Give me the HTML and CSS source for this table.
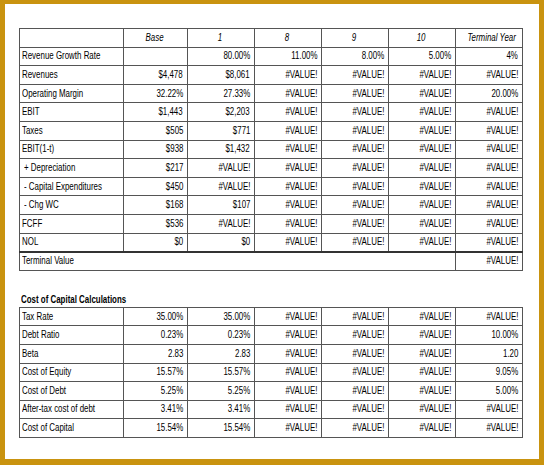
FILE: index.html
```html
<!DOCTYPE html>
<html lang="en">
<head>
    <meta charset="UTF-8">
    <title>FCFF Valuation</title>
    <link rel="stylesheet" href="styles.css">
</head>
<body>
    <div class="frame">
        <table class="sheet">
            <colgroup>
                <col class="c-label"><col class="c-base"><col class="c-yr"><col class="c-yr"><col class="c-yr"><col class="c-yr"><col class="c-yr">
            </colgroup>
            <tr class="head">
                <td></td><td><span>Base</span></td><td><span>1</span></td><td><span>8</span></td><td><span>9</span></td><td><span>10</span></td><td><span>Terminal Year</span></td>
            </tr>
            <tr><td><span>Revenue Growth Rate</span></td><td></td><td><span>80.00%</span></td><td><span>11.00%</span></td><td><span>8.00%</span></td><td><span>5.00%</span></td><td><span>4%</span></td></tr>
            <tr><td><span>Revenues</span></td><td><span>$4,478</span></td><td><span>$8,061</span></td><td><span>#VALUE!</span></td><td><span>#VALUE!</span></td><td><span>#VALUE!</span></td><td><span>#VALUE!</span></td></tr>
            <tr><td><span>Operating Margin</span></td><td><span>32.22%</span></td><td><span>27.33%</span></td><td><span>#VALUE!</span></td><td><span>#VALUE!</span></td><td><span>#VALUE!</span></td><td><span>20.00%</span></td></tr>
            <tr><td><span>EBIT</span></td><td><span>$1,443</span></td><td><span>$2,203</span></td><td><span>#VALUE!</span></td><td><span>#VALUE!</span></td><td><span>#VALUE!</span></td><td><span>#VALUE!</span></td></tr>
            <tr><td><span>Taxes</span></td><td><span>$505</span></td><td><span>$771</span></td><td><span>#VALUE!</span></td><td><span>#VALUE!</span></td><td><span>#VALUE!</span></td><td><span>#VALUE!</span></td></tr>
            <tr><td><span>EBIT(1-t)</span></td><td><span>$938</span></td><td><span>$1,432</span></td><td><span>#VALUE!</span></td><td><span>#VALUE!</span></td><td><span>#VALUE!</span></td><td><span>#VALUE!</span></td></tr>
            <tr><td class="sub"><span>+ Depreciation</span></td><td><span>$217</span></td><td><span>#VALUE!</span></td><td><span>#VALUE!</span></td><td><span>#VALUE!</span></td><td><span>#VALUE!</span></td><td><span>#VALUE!</span></td></tr>
            <tr><td class="sub"><span>- Capital Expenditures</span></td><td><span>$450</span></td><td><span>#VALUE!</span></td><td><span>#VALUE!</span></td><td><span>#VALUE!</span></td><td><span>#VALUE!</span></td><td><span>#VALUE!</span></td></tr>
            <tr><td class="sub"><span>- Chg WC</span></td><td><span>$168</span></td><td><span>$107</span></td><td><span>#VALUE!</span></td><td><span>#VALUE!</span></td><td><span>#VALUE!</span></td><td><span>#VALUE!</span></td></tr>
            <tr><td><span>FCFF</span></td><td><span>$536</span></td><td><span>#VALUE!</span></td><td><span>#VALUE!</span></td><td><span>#VALUE!</span></td><td><span>#VALUE!</span></td><td><span>#VALUE!</span></td></tr>
            <tr><td><span>NOL</span></td><td><span>$0</span></td><td><span>$0</span></td><td><span>#VALUE!</span></td><td><span>#VALUE!</span></td><td><span>#VALUE!</span></td><td><span>#VALUE!</span></td></tr>
            <tr class="terminal"><td colspan="6"><span>Terminal Value</span></td><td><span>#VALUE!</span></td></tr>
        </table>

        <h2 class="section-title"><span>Cost of Capital Calculations</span></h2>

        <table class="sheet">
            <colgroup>
                <col class="c-label"><col class="c-base"><col class="c-yr"><col class="c-yr"><col class="c-yr"><col class="c-yr"><col class="c-yr">
            </colgroup>
            <tr><td><span>Tax Rate</span></td><td><span>35.00%</span></td><td><span>35.00%</span></td><td><span>#VALUE!</span></td><td><span>#VALUE!</span></td><td><span>#VALUE!</span></td><td><span>#VALUE!</span></td></tr>
            <tr><td><span>Debt Ratio</span></td><td><span>0.23%</span></td><td><span>0.23%</span></td><td><span>#VALUE!</span></td><td><span>#VALUE!</span></td><td><span>#VALUE!</span></td><td><span>10.00%</span></td></tr>
            <tr><td><span>Beta</span></td><td><span>2.83</span></td><td><span>2.83</span></td><td><span>#VALUE!</span></td><td><span>#VALUE!</span></td><td><span>#VALUE!</span></td><td><span>1.20</span></td></tr>
            <tr><td><span>Cost of Equity</span></td><td><span>15.57%</span></td><td><span>15.57%</span></td><td><span>#VALUE!</span></td><td><span>#VALUE!</span></td><td><span>#VALUE!</span></td><td><span>9.05%</span></td></tr>
            <tr><td><span>Cost of Debt</span></td><td><span>5.25%</span></td><td><span>5.25%</span></td><td><span>#VALUE!</span></td><td><span>#VALUE!</span></td><td><span>#VALUE!</span></td><td><span>5.00%</span></td></tr>
            <tr><td><span>After-tax cost of debt</span></td><td><span>3.41%</span></td><td><span>3.41%</span></td><td><span>#VALUE!</span></td><td><span>#VALUE!</span></td><td><span>#VALUE!</span></td><td><span>#VALUE!</span></td></tr>
            <tr><td><span>Cost of Capital</span></td><td><span>15.54%</span></td><td><span>15.54%</span></td><td><span>#VALUE!</span></td><td><span>#VALUE!</span></td><td><span>#VALUE!</span></td><td><span>#VALUE!</span></td></tr>
        </table>
    </div>
</body>
</html>
```

FILE: styles.css
```css
*, *::after, *::before {
    box-sizing: border-box;
}

body {
    margin: 0;
    font-family: "Liberation Sans", Arial, sans-serif;
    font-size: 11px;
    color: #000;
}

.frame {
    width: 544px;
    height: 465px;
    border-style: solid;
    border-color: #c9930f;
    border-width: 4px 5px 6px 5px;
    background: #fff;
    padding: 24px 0 0 14px;
}

.sheet {
    border-collapse: collapse;
    table-layout: fixed;
    width: 504px;
}

.c-label { width: 104px; }
.c-base { width: 64px; }
.c-yr { width: 67px; }

.sheet td {
    height: 18.6px;
    padding: 0 4px 1px 2px;
    border: 1px solid #555;
    text-align: right;
    white-space: nowrap;
    line-height: 1;
}

/* narrow spreadsheet font: squeeze the glyphs sideways */
.sheet td span,
.section-title span {
    display: inline-block;
    transform: scaleX(0.72);
    transform-origin: right center;
}

.sheet td:first-child {
    text-align: left;
}

.sheet td:first-child span,
.section-title span {
    transform-origin: left center;
}

.sheet td.sub {
    padding-left: 4px;
}

.head td {
    text-align: center;
    font-style: italic;
}

.head td span {
    transform-origin: center;
}

.terminal td {
    border-top: 2px solid #333;
}

.section-title {
    margin: 22px 0 2px 2px;
    font-size: 11px;
    font-weight: bold;
    line-height: 12px;
}
```
